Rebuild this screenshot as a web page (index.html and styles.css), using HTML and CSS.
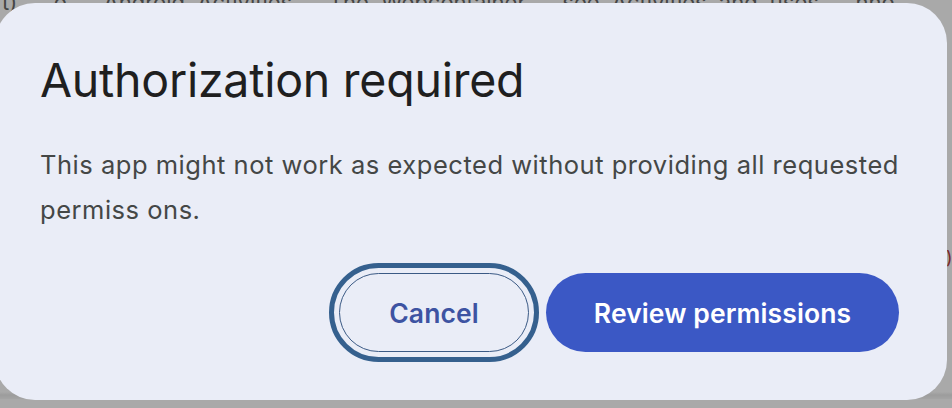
FILE: index.html
```html
<!DOCTYPE html>
<html lang="en">
<head>
<meta charset="utf-8">
<title>Authorization required</title>
<link rel="stylesheet" href="styles.css">
</head>
<body>
<div class="backdrop">
  <div class="bg-line">t) &nbsp; o &nbsp; Android Activities &nbsp; The Webcontainer &nbsp; see Activities and uses &nbsp; nho</div>
  <span class="bg-mark">)</span>
</div>
<div class="dialog" role="dialog" aria-labelledby="dlg-title">
  <h1 class="dialog-title" id="dlg-title">Authorization required</h1>
  <p class="dialog-text">This app might not work as expected without providing all requested permiss ons.</p>
  <div class="dialog-actions">
    <button class="btn btn-outline" type="button">Cancel</button>
    <button class="btn btn-filled" type="button">Review permissions</button>
  </div>
</div>
</body>
</html>
```

FILE: styles.css
```css
html, body {
  margin: 0;
  padding: 0;
}
body {
  width: 952px;
  height: 408px;
  overflow: hidden;
  position: relative;
  background: #a9a9a9;
  font-family: Inter, Roboto, sans-serif;
}
.backdrop {
  height: 408px;
  background: linear-gradient(to bottom, #a9a9a9 0, #a9a9a9 401px, #9c9c9c 404px, #a4a4a4 408px);
}
.bg-line {
  white-space: nowrap;
  font-size: 22px;
  line-height: 22px;
  color: #454545;
  margin-top: -9px;
  padding-left: 2px;
  word-spacing: 6px;
}
.bg-mark {
  position: absolute;
  left: 946px;
  top: 247px;
  font-size: 18px;
  color: #7a2a2a;
}
.dialog {
  position: absolute;
  left: -5px;
  top: 3px;
  width: 952px;
  height: 397px;
  box-sizing: border-box;
  background: #eaedf7;
  border-radius: 40px;
  padding: 47px 40px 0 45px;
  display: flex;
  flex-direction: column;
}
.dialog-title {
  margin: 0;
  font-weight: 400;
  font-size: 46.5px;
  line-height: 60px;
  color: #1f1f1f;
  letter-spacing: -0.25px;
}
.dialog-text {
  margin: 32px 0 0;
  font-size: 25.5px;
  line-height: 45px;
  color: #444746;
  letter-spacing: 0.52px;
}
.dialog-actions {
  display: flex;
  justify-content: flex-end;
  gap: 17px;
  margin-top: 41px;
  padding-right: 8px;
}
.btn {
  font-family: Inter, Roboto, sans-serif;
  font-size: 26.5px;
  font-weight: 600;
  letter-spacing: 0.1px;
  height: 79px;
  border-radius: 40px;
  cursor: pointer;
  box-sizing: border-box;
}
.btn-outline {
  width: 190px;
  background: transparent;
  color: #3d53a2;
  border: 1px solid #3b5a85;
  outline: 5.5px solid #35608e;
  outline-offset: 5px;
}
.btn-filled {
  width: 353px;
  background: #3b58c5;
  color: #ffffff;
  border: none;
}
```
